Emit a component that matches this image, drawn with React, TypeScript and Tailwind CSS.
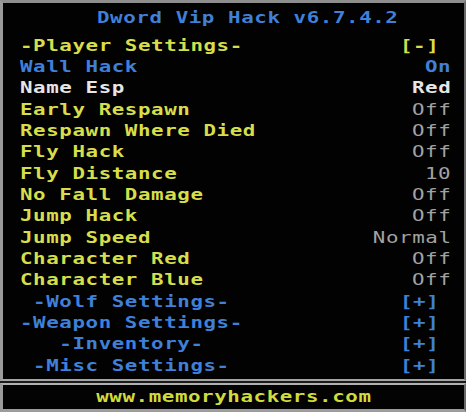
type Row = { label: string; value: string; lc: string; vc: string };

const Y = 'text-[#d6de4a]';
const B = 'text-[#3f80d8]';
const W = 'text-[#e6e6e6]';
const G = 'text-[#a2a2a2]';

const rows: Row[] = [
  { label: '-Player Settings-', value: '[-]', lc: Y, vc: Y },
  { label: 'Wall Hack', value: 'On', lc: B, vc: B },
  { label: 'Name Esp', value: 'Red', lc: W, vc: W },
  { label: 'Early Respawn', value: 'Off', lc: Y, vc: G },
  { label: 'Respawn Where Died', value: 'Off', lc: Y, vc: G },
  { label: 'Fly Hack', value: 'Off', lc: Y, vc: G },
  { label: 'Fly Distance', value: '10', lc: Y, vc: G },
  { label: 'No Fall Damage', value: 'Off', lc: Y, vc: G },
  { label: 'Jump Hack', value: 'Off', lc: Y, vc: G },
  { label: 'Jump Speed', value: 'Normal', lc: Y, vc: G },
  { label: 'Character Red', value: 'Off', lc: Y, vc: G },
  { label: 'Character Blue', value: 'Off', lc: Y, vc: G },
  { label: ' -Wolf Settings-', value: '[+]', lc: B, vc: B },
  { label: '-Weapon Settings-', value: '[+]', lc: B, vc: B },
  { label: '   -Inventory-', value: '[+]', lc: B, vc: B },
  { label: ' -Misc Settings-', value: '[+]', lc: B, vc: B },
];

export default function App() {
  return (
    <div
      className="w-[466px] h-[412px] bg-[#0a0a0a] flex flex-col overflow-hidden text-[16px] font-bold tracking-[0.45px]"
      style={{ fontFamily: '"DejaVu Sans Mono", "Liberation Mono", monospace' }}
    >
      <div className="h-[383px] flex flex-col bg-[#020202] border-t-[3px] border-t-[#8e8e8e] border-l-[3px] border-l-[#9a9a9a] border-r-2 border-r-[#6a6a6a] border-b-2 border-b-[#a4a4a4] pl-[17px] pr-[13px]">
        <div className={`h-[30px] mb-[2px] flex items-center pl-[77px] ${B} whitespace-pre`}>
          <span className="scale-x-[1.3] origin-left">Dword Vip Hack v6.7.4.2</span>
        </div>
        {rows.map((r) => (
          <div key={r.label} className="h-[21.33px] flex items-center justify-between whitespace-pre leading-none">
            <span className={`${r.lc} scale-x-[1.3] origin-left`}>{r.label}</span>
            <span
              className={`${r.vc} scale-x-[1.3] origin-right ${r.value.startsWith('[') ? 'mr-[12px]' : ''} ${r.vc === G ? 'font-normal' : ''}`}
            >
              {r.value}
            </span>
          </div>
        ))}
      </div>
      <div className="h-[2px] bg-[#1a1a1a]" />
      <div className="flex-1 flex items-center justify-center pl-[1px] bg-[#030303] border-t-2 border-t-[#b0b0b0] border-b-[3px] border-b-[#9c9c9c] border-l-[3px] border-l-[#9a9a9a] border-r-2 border-r-[#6a6a6a] text-[#cfdc3a]">
        <span className="scale-x-[1.3]">www.memoryhackers.com</span>
      </div>
    </div>
  );
}
